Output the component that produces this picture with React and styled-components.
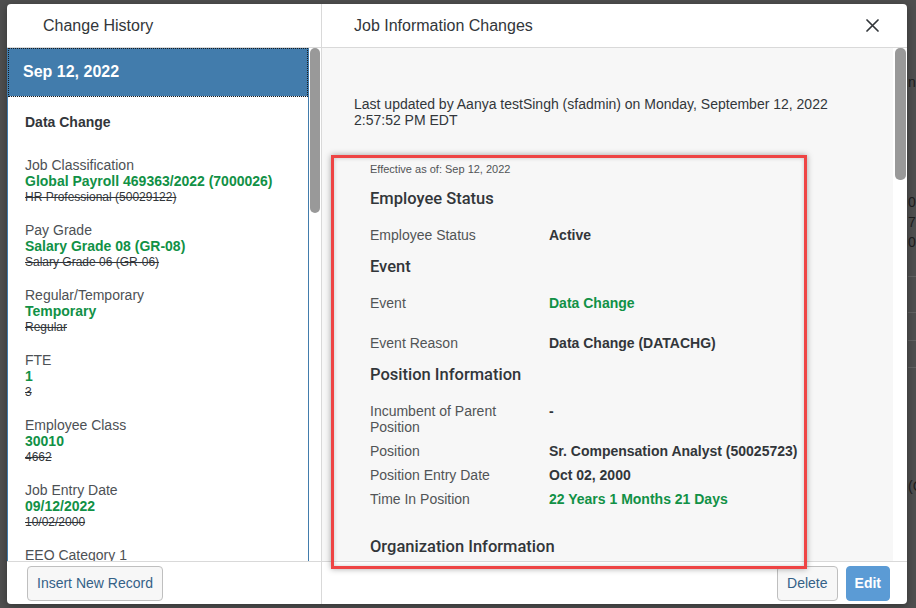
import React from 'react';
import styled, { createGlobalStyle } from 'styled-components';

const GlobalStyle = createGlobalStyle`
  html, body {
    margin: 0;
    padding: 0;
    background: #4f4f4f;
    font-family: "Liberation Sans", Arial, sans-serif;
  }
  * { box-sizing: border-box; }
`;

const changes = [
  { label: 'Job Classification', value: 'Global Payroll 469363/2022 (7000026)', old: 'HR Professional (50029122)' },
  { label: 'Pay Grade', value: 'Salary Grade 08 (GR-08)', old: 'Salary Grade 06 (GR-06)' },
  { label: 'Regular/Temporary', value: 'Temporary', old: 'Regular' },
  { label: 'FTE', value: '1', old: '3' },
  { label: 'Employee Class', value: '30010', old: '4662' },
  { label: 'Job Entry Date', value: '09/12/2022', old: '10/02/2000' },
  { label: 'EEO Category 1', value: '', old: '' },
];

const CloseIcon = () => (
  <svg width="13" height="13" viewBox="0 0 13 13">
    <path d="M1 1 L12 12 M12 1 L1 12" stroke="#32363a" strokeWidth="1.7" strokeLinecap="round" />
  </svg>
);

const App = () => {
  return (
    <Page>
      <GlobalStyle />
      <BackPage>
        <BackColumn>
          <BackText top={74}>nsactions</BackText>
          <BackText top={104}>0000</BackText>
          <BackText top={4}>7100</BackText>
          <BackText top={4}>0000</BackText>
          <BackRule top={26} />
          <BackRule top={35} />
          <BackRule top={27} />
          <BackRule top={26} />
          <BackText top={110}>(C</BackText>
        </BackColumn>
      </BackPage>

      <Dialog>
        <LeftColumn>
          <Header>
            <HeaderTitle pad={36}>Change History</HeaderTitle>
          </Header>
          <Body>
            <HistoryList>
              <DateItem>Sep 12, 2022</DateItem>
              <ChangeBlock>
                <EventName>Data Change</EventName>
                {changes.map((c) => (
                  <ChangeGroup key={c.label}>
                    <ChangeLabel>{c.label}</ChangeLabel>
                    {c.value && <NewValue>{c.value}</NewValue>}
                    {c.old && <OldValue>{c.old}</OldValue>}
                  </ChangeGroup>
                ))}
              </ChangeBlock>
            </HistoryList>
            <ScrollTrack width={12}>
              <Thumb width={10} height={165} />
            </ScrollTrack>
          </Body>
          <Footer>
            <Button>Insert New Record</Button>
          </Footer>
        </LeftColumn>

        <RightColumn>
          <Header>
            <HeaderTitle pad={32}>Job Information Changes</HeaderTitle>
            <CloseButton><CloseIcon /></CloseButton>
          </Header>
          <Body>
            <Details>
              <Updated>
                Last updated by Aanya testSingh (sfadmin) on Monday, September 12, 2022 2:57:52 PM EDT
              </Updated>
              <Card>
                <Effective>Effective as of: Sep 12, 2022</Effective>
                <SectionTitle>Employee Status</SectionTitle>
                <FieldGroup>
                  <FieldRow>
                    <FieldLabel>Employee Status</FieldLabel>
                    <FieldValue>Active</FieldValue>
                  </FieldRow>
                </FieldGroup>
                <SectionTitle>Event</SectionTitle>
                <FieldGroup>
                  <FieldRow>
                    <FieldLabel>Event</FieldLabel>
                    <FieldValue changed>Data Change</FieldValue>
                  </FieldRow>
                  <FieldRow spaced>
                    <FieldLabel>Event Reason</FieldLabel>
                    <FieldValue>Data Change (DATACHG)</FieldValue>
                  </FieldRow>
                </FieldGroup>
                <SectionTitle>Position Information</SectionTitle>
                <FieldGroup>
                  <FieldRow>
                    <FieldLabel>Incumbent of Parent Position</FieldLabel>
                    <FieldValue>-</FieldValue>
                  </FieldRow>
                  <FieldRow>
                    <FieldLabel>Position</FieldLabel>
                    <FieldValue>Sr. Compensation Analyst (50025723)</FieldValue>
                  </FieldRow>
                  <FieldRow>
                    <FieldLabel>Position Entry Date</FieldLabel>
                    <FieldValue>Oct 02, 2000</FieldValue>
                  </FieldRow>
                  <FieldRow>
                    <FieldLabel>Time In Position</FieldLabel>
                    <FieldValue changed>22 Years 1 Months 21 Days</FieldValue>
                  </FieldRow>
                </FieldGroup>
                <SectionTitle top={28}>Organization Information</SectionTitle>
              </Card>
            </Details>
            <ScrollTrack width={14}>
              <Thumb width={11} height={132} />
            </ScrollTrack>
          </Body>
          <Footer align="flex-end">
            <Button>Delete</Button>
            <Button primary>Edit</Button>
          </Footer>
        </RightColumn>

        <Highlight />
      </Dialog>
    </Page>
  );
};

const Page = styled.div`
  position: relative;
  width: 916px;
  height: 608px;
  overflow: hidden;
  background: #4f4f4f;
`;

const BackPage = styled.div`
  display: flex;
  justify-content: flex-end;
  height: 100%;
`;

const BackColumn = styled.div`
  width: 8px;
  overflow: hidden;
  display: flex;
  flex-direction: column;
`;

const BackText = styled.div`
  margin-top: ${(p) => p.top}px;
  font-size: 14px;
  line-height: 16px;
  color: #1e1e1e;
  white-space: nowrap;
`;

const BackRule = styled.div`
  margin-top: ${(p) => p.top}px;
  height: 1px;
  background: #626262;
`;

const Dialog = styled.div`
  position: absolute;
  left: 7px;
  top: 4px;
  width: 900px;
  height: 600px;
  display: flex;
  background: #fff;
  border-radius: 4px;
  box-shadow: 0 2px 8px rgba(0, 0, 0, 0.35);
  color: #32363a;
`;

const LeftColumn = styled.div`
  width: 315px;
  display: flex;
  flex-direction: column;
  border-right: 1px solid #d9d9d9;
`;

const RightColumn = styled.div`
  flex: 1;
  display: flex;
  flex-direction: column;
`;

const Header = styled.div`
  height: 44px;
  flex-shrink: 0;
  display: flex;
  align-items: center;
  justify-content: space-between;
  border-bottom: 1px solid #d9d9d9;
`;

const HeaderTitle = styled.div`
  padding-left: ${(p) => p.pad}px;
  font-size: 16px;
  color: #32363a;
`;

const CloseButton = styled.div`
  width: 13px;
  height: 13px;
  margin-right: 28px;
  display: flex;
`;

const Body = styled.div`
  flex: 1;
  display: flex;
  min-height: 0;
  overflow: hidden;
`;

const HistoryList = styled.div`
  flex: 1;
  border-left: 1px solid #427cac;
  border-right: 1px solid #427cac;
  overflow: hidden;
`;

const DateItem = styled.div`
  height: 49px;
  display: flex;
  align-items: center;
  padding-left: 15px;
  background: #427cac;
  border-bottom: 1px solid #dfe8f1;
  outline: 1px dotted #1a1a1a;
  outline-offset: -1px;
  color: #fff;
  font-size: 16px;
  font-weight: bold;
`;

const ChangeBlock = styled.div`
  padding: 17px 16px 0 17px;
`;

const EventName = styled.div`
  font-size: 14px;
  line-height: 16px;
  font-weight: bold;
  color: #32363a;
  margin-bottom: 27px;
`;

const ChangeGroup = styled.div`
  display: flex;
  flex-direction: column;
  margin-bottom: 17px;
`;

const ChangeLabel = styled.div`
  font-size: 14px;
  line-height: 16px;
  color: #4d5155;
`;

const NewValue = styled.div`
  font-size: 14px;
  line-height: 16px;
  font-weight: bold;
  color: #119146;
`;

const OldValue = styled.div`
  font-size: 12px;
  line-height: 16px;
  color: #32363a;
  text-decoration: line-through;
`;

const ScrollTrack = styled.div`
  width: ${(p) => p.width}px;
  flex-shrink: 0;
  background: #fff;
  display: flex;
  justify-content: center;
`;

const Thumb = styled.div`
  width: ${(p) => p.width}px;
  height: ${(p) => p.height}px;
  background: #999;
  border-radius: 5px;
`;

const Details = styled.div`
  flex: 1;
  background: #f7f7f7;
  padding: 48px 32px 0;
  overflow: hidden;
`;

const Updated = styled.div`
  font-size: 14px;
  line-height: 16px;
  color: #32363a;
  margin-bottom: 35px;
`;

const Card = styled.div`
  padding-left: 16px;
`;

const Effective = styled.div`
  font-size: 11px;
  line-height: 12px;
  color: #515456;
`;

const SectionTitle = styled.div`
  margin: ${(p) => p.top || 12}px 0 16px;
  font-family: Roboto, "Liberation Sans", Arial, sans-serif;
  font-size: 16.5px;
  line-height: 24px;
  font-weight: 500;
  color: #32363a;
`;

const FieldGroup = styled.div`
  display: flex;
  flex-direction: column;
  gap: 8px;
`;

const FieldRow = styled.div`
  display: grid;
  grid-template-columns: 160px 1fr;
  column-gap: 19px;
  margin-top: ${(p) => (p.spaced ? 16 : 0)}px;
`;

const FieldLabel = styled.div`
  font-size: 14px;
  line-height: 16px;
  color: #515456;
`;

const FieldValue = styled.div`
  font-size: 14px;
  line-height: 16px;
  font-weight: bold;
  color: ${(p) => (p.changed ? '#119146' : '#32363a')};
`;

const Footer = styled.div`
  height: 43px;
  flex-shrink: 0;
  display: flex;
  align-items: center;
  justify-content: ${(p) => p.align || 'flex-start'};
  gap: 8px;
  padding: 0 17px 0 20px;
  border-top: 1px solid #d9d9d9;
`;

const Button = styled.button`
  height: 35px;
  padding: 0 ${(p) => (p.primary ? 8 : 9)}px;
  border-radius: 4px;
  border: 1px solid ${(p) => (p.primary ? '#5b9bd5' : '#bfbfbf')};
  background: ${(p) => (p.primary ? '#5b9bd5' : '#f7f7f7')};
  color: ${(p) => (p.primary ? '#fff' : '#346187')};
  font-family: "Liberation Sans", Arial, sans-serif;
  font-size: 14px;
  font-weight: ${(p) => (p.primary ? 'bold' : 'normal')};
`;

const Highlight = styled.div`
  position: absolute;
  left: 324px;
  top: 151px;
  width: 476px;
  height: 414px;
  border: 3px solid #ee4444;
  box-shadow: 0 0 6px rgba(0, 0, 0, 0.35), inset 0 0 4px rgba(0, 0, 0, 0.2);
  pointer-events: none;
`;

export default App;
